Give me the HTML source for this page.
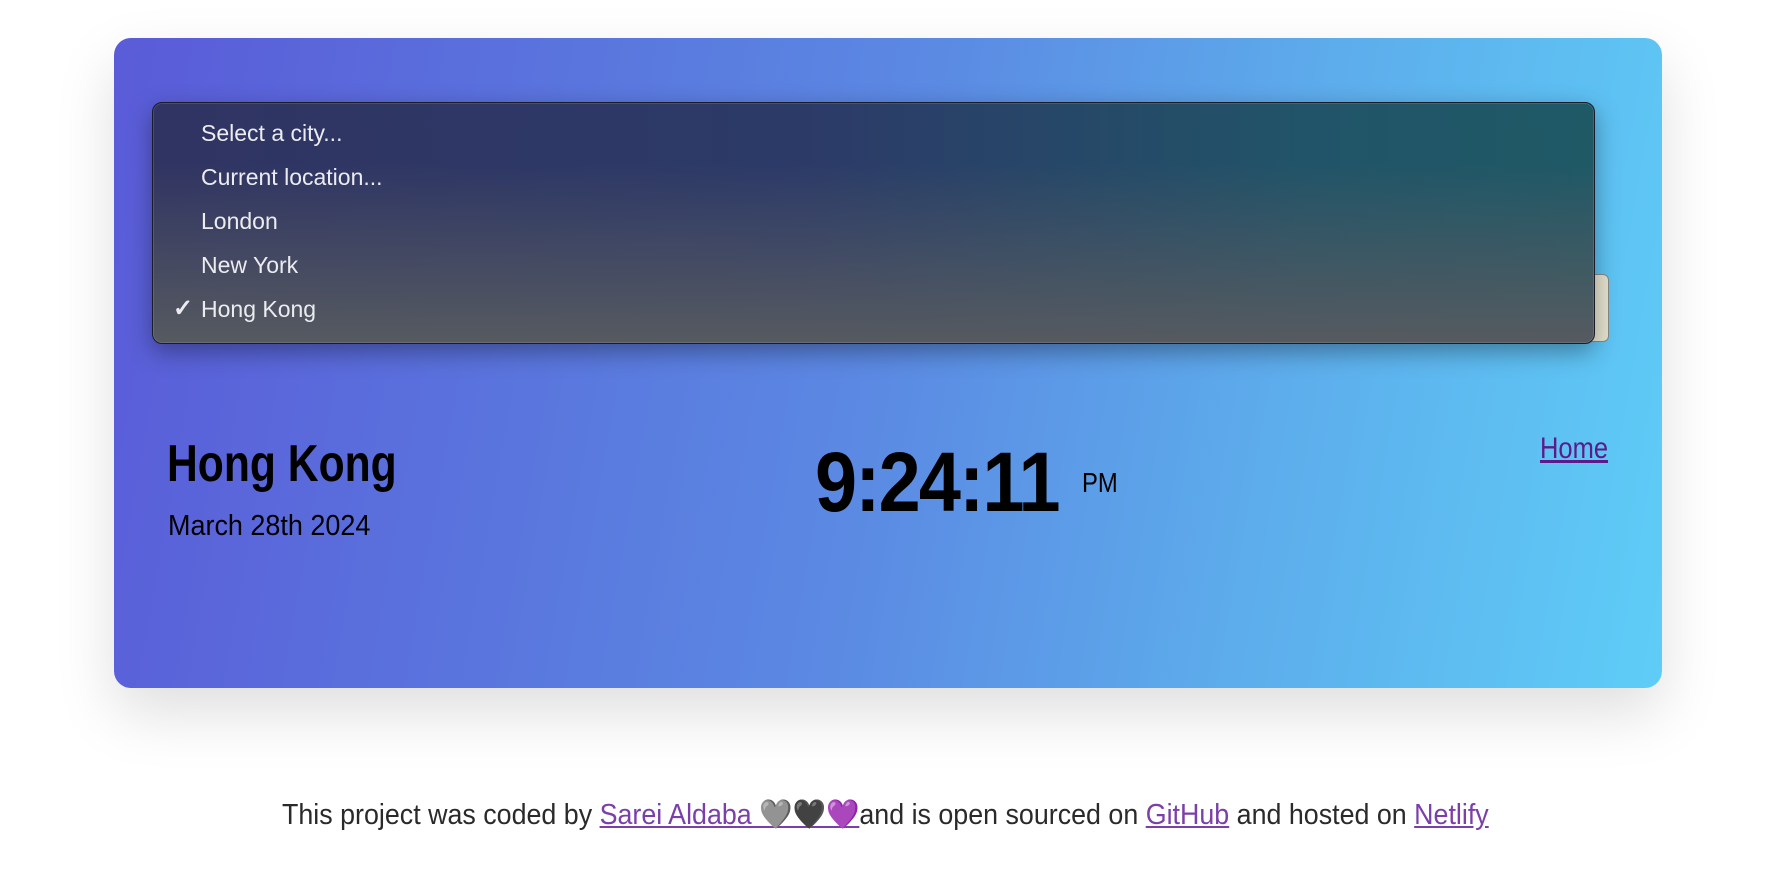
<!DOCTYPE html>
<html><head><meta charset="utf-8">
<style>
html,body{margin:0;padding:0;width:1776px;height:892px;background:#fff;overflow:hidden;font-family:"Liberation Sans",sans-serif}
.card{position:absolute;left:114px;top:38px;width:1548px;height:650px;border-radius:17px;
background:linear-gradient(100deg,#5a5bd8 0%,#5a72dd 25%,#5b8ae3 50%,#5daeec 75%,#5ecdf7 100%);
box-shadow:0 25px 60px rgba(0,0,0,0.13)}
.sel{position:absolute;left:1560px;top:274px;width:47px;height:66px;border-radius:6px;background:#e6e3cf;border:1px solid #888}
.dd{position:absolute;left:152px;top:102px;width:1441px;height:240px;border-radius:10px;border:1px solid #1a1d28;
background:linear-gradient(180deg,rgba(80,85,95,0) 0%,rgba(80,85,95,0) 25%,rgba(86,90,96,1) 100%),linear-gradient(90deg,#303462 0%,#2c3a68 45%,#215468 80%,#1f5966 100%);
box-shadow:0 8px 24px rgba(0,0,0,0.35),inset 0 0 0 1px rgba(255,255,255,0.12)}
.dd div{position:absolute;left:48px;color:#ececf0;font-size:23px;line-height:26px}
.t{position:absolute;color:#000;font-weight:bold;white-space:nowrap}
a{color:#7a3fa8;text-decoration:underline}
</style></head><body>
<div class="card"></div>
<div class="sel"></div>
<div class="dd">
<div style="top:17px">Select a city...</div>
<div style="top:61px">Current location...</div>
<div style="top:105px">London</div>
<div style="top:149px">New York</div>
<div style="top:193px"><span style="position:absolute;left:-28px;font-size:24px;font-weight:bold">✓</span>Hong Kong</div>
</div>
<div class="t" style="left:167px;top:434px;font-size:52px;transform:scaleX(0.82);transform-origin:left">Hong Kong</div>
<div class="t" style="left:168px;top:510px;font-size:29px;font-weight:normal;transform:scaleX(0.93);transform-origin:left">March 28th 2024</div>
<div class="t" style="left:815px;top:434px;font-size:84px;letter-spacing:-2px;transform:scaleX(0.9);transform-origin:left">9:24:11</div>
<div class="t" style="left:1082px;top:467px;font-size:28px;font-weight:normal;transform:scaleX(0.85);transform-origin:left">PM</div>
<div class="t" style="left:1540px;top:432px;font-size:30px;font-weight:normal;"><a style="color:#5c1a8a;display:inline-block;transform:scaleX(0.85);transform-origin:left">Home</a></div>
<div class="t" style="left:282px;top:798px;font-size:29px;font-weight:normal;color:#2a2a2a;transform:scaleX(0.925);transform-origin:left">This project was coded by <a>Sarei Aldaba 🩶🖤💜</a>and is open sourced on <a>GitHub</a> and hosted on <a>Netlify</a></div>
</body></html>
